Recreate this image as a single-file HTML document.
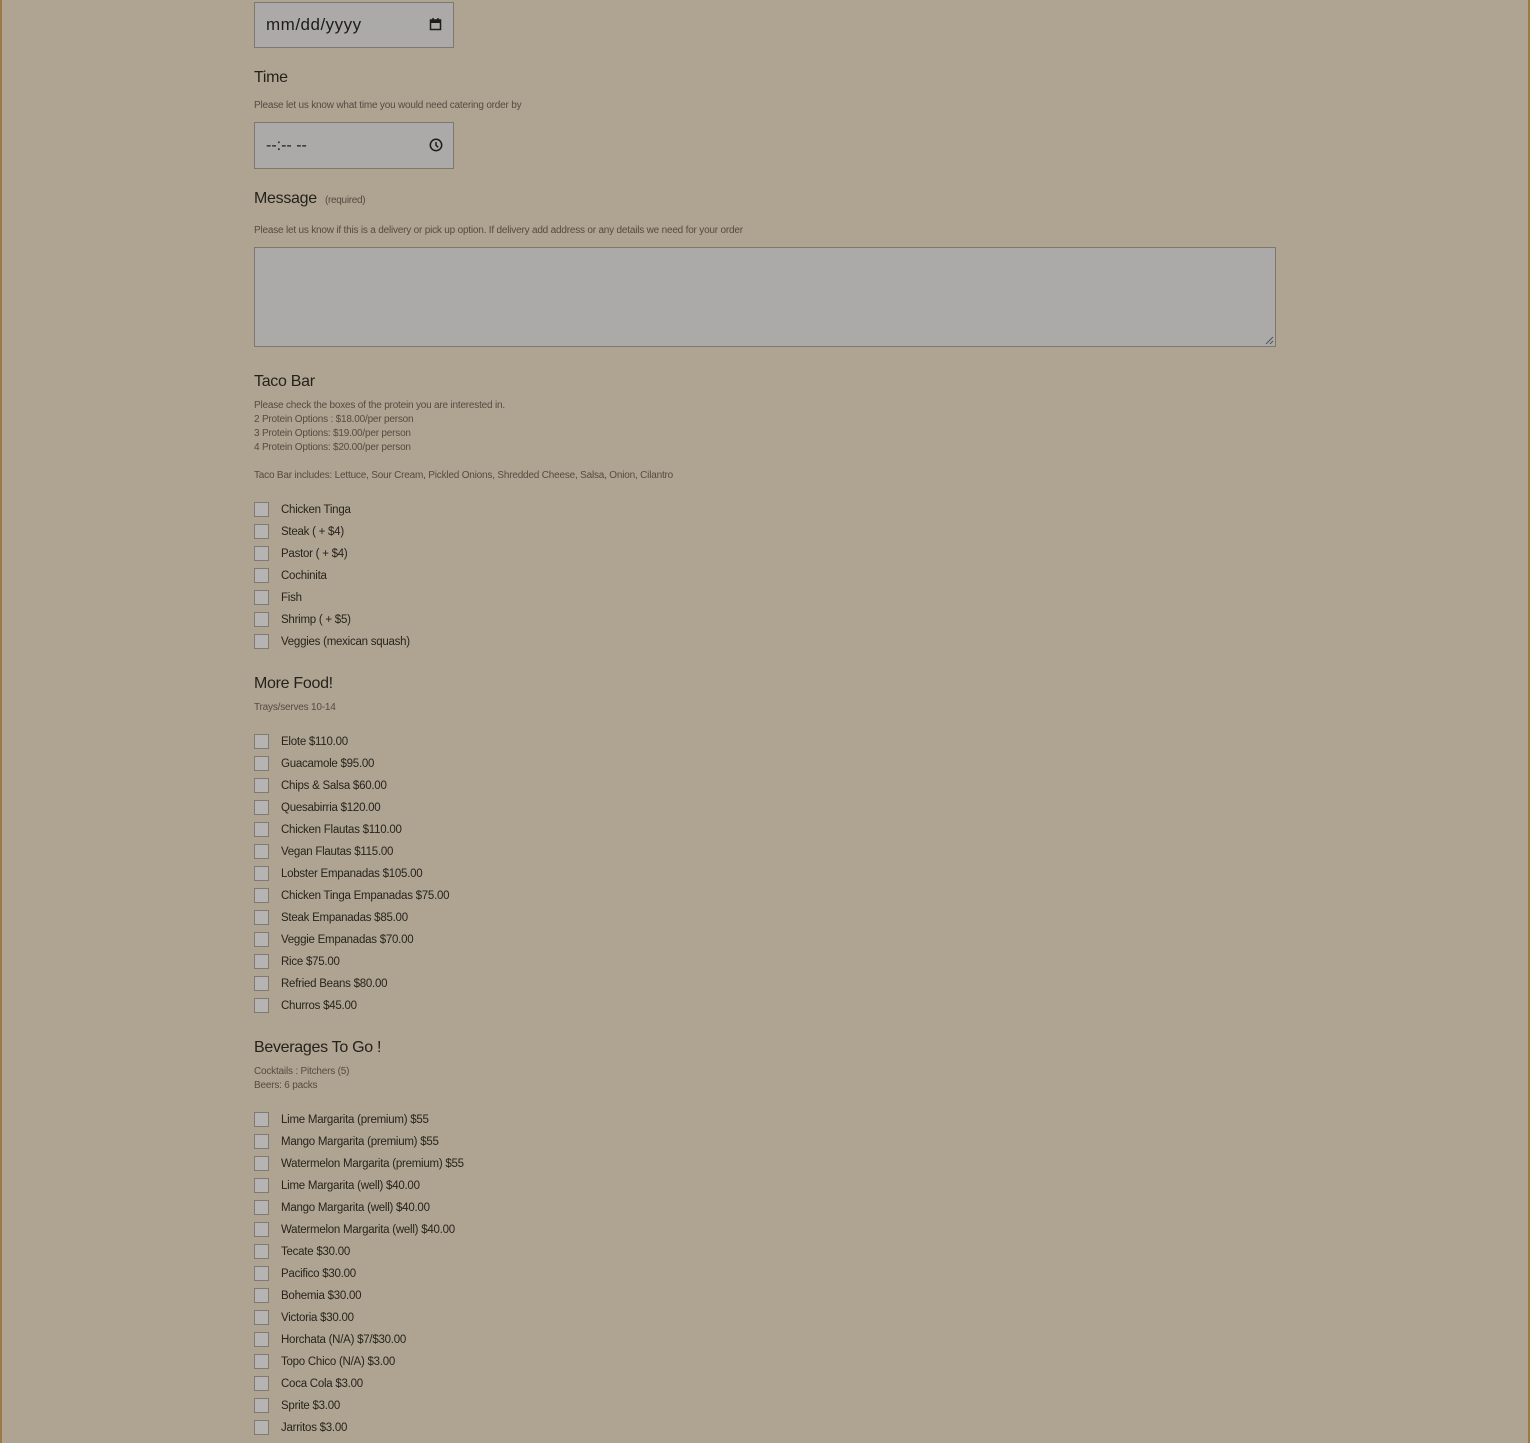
<!DOCTYPE html>
<html><head><meta charset="utf-8"><style>
html,body{margin:0;padding:0}
body{width:1530px;height:1443px;background:#aea491;position:relative;overflow:hidden;font-family:"Liberation Sans",sans-serif;color:#2b2621}
.edge{position:absolute;top:0;bottom:0;width:2px;background:#9c7a48}
.a{position:absolute;white-space:nowrap}
.h{font-size:16px;letter-spacing:-0.3px;color:#25211c}
.d{font-size:10px;letter-spacing:-0.2px;color:#544c42;line-height:14px}
.inp{position:absolute;background:#abaaa8;border:1px solid #7c776f;box-sizing:border-box}
.r{position:absolute;left:254px;height:16px;line-height:17px;font-size:11.5px;letter-spacing:-0.25px;color:#27231e;white-space:nowrap;padding-left:27px}
.r i{position:absolute;left:0;top:0;width:15px;height:15px;box-sizing:border-box;border:1px solid #7f7b74;background:#b5b4b2}
</style></head><body>
<div class="edge" style="left:0"></div><div class="edge" style="right:0"></div>

<div class="inp" style="left:254px;top:2px;width:200px;height:46px"></div>
<div class="a" style="left:266px;top:15px;font-size:17px;color:#1f1c18;letter-spacing:0.5px;font-weight:300">mm/dd/yyyy</div>
<svg class="a" style="left:429px;top:17px" width="13" height="14" viewBox="0 0 13 14"><rect x="1.5" y="3" width="10" height="9.5" fill="none" stroke="#1f1c18" stroke-width="1.5"/><rect x="1.5" y="3" width="10" height="3" fill="#1f1c18"/><path d="M4 1v3M9 1v3" stroke="#1f1c18" stroke-width="1.5"/></svg>

<div class="a h" style="left:254px;top:69px">Time</div>
<div class="a d" style="left:254px;top:99px">Please let us know what time you would need catering order by</div>
<div class="inp" style="left:254px;top:122px;width:200px;height:47px"></div>
<div class="a" style="left:266px;top:137px;font-size:16px;color:#1f1c18">--:-- --</div>
<svg class="a" style="left:429px;top:138px" width="14" height="14" viewBox="0 0 14 14"><circle cx="7" cy="7" r="5.7" fill="none" stroke="#1f1c18" stroke-width="1.5"/><path d="M7 4v3.3l2.2 2" fill="none" stroke="#1f1c18" stroke-width="1.5"/></svg>

<div class="a h" style="left:254px;top:190px">Message <span style="font-size:10px;color:#544c42;margin-left:4px">(required)</span></div>
<div class="a d" style="left:254px;top:224px">Please let us know if this is a delivery or pick up option. If delivery add address or any details we need for your order</div>
<div class="inp" style="left:254px;top:247px;width:1022px;height:100px"></div>
<svg class="a" style="left:1265px;top:336px" width="9" height="9"><path d="M1 8L8 1M5 8L8 5" stroke="#555" stroke-width="1"/></svg>

<div class="a h" style="left:254px;top:373px">Taco Bar</div>
<div class="a d" style="left:254px;top:399px">Please check the boxes of the protein you are interested in.<br>2 Protein Options : $18.00/per person<br>3 Protein Options: $19.00/per person<br>4 Protein Options: $20.00/per person<br><br>Taco Bar includes: Lettuce, Sour Cream, Pickled Onions, Shredded Cheese, Salsa, Onion, Cilantro</div>

<div class="r" style="top:502px"><i></i>Chicken Tinga</div>
<div class="r" style="top:524px"><i></i>Steak ( + $4)</div>
<div class="r" style="top:546px"><i></i>Pastor ( + $4)</div>
<div class="r" style="top:568px"><i></i>Cochinita</div>
<div class="r" style="top:590px"><i></i>Fish</div>
<div class="r" style="top:612px"><i></i>Shrimp ( + $5)</div>
<div class="r" style="top:634px"><i></i>Veggies (mexican squash)</div>

<div class="a h" style="left:254px;top:675px">More Food!</div>
<div class="a d" style="left:254px;top:701px">Trays/serves 10-14</div>

<div class="r" style="top:734px"><i></i>Elote $110.00</div>
<div class="r" style="top:756px"><i></i>Guacamole $95.00</div>
<div class="r" style="top:778px"><i></i>Chips &amp; Salsa $60.00</div>
<div class="r" style="top:800px"><i></i>Quesabirria $120.00</div>
<div class="r" style="top:822px"><i></i>Chicken Flautas $110.00</div>
<div class="r" style="top:844px"><i></i>Vegan Flautas $115.00</div>
<div class="r" style="top:866px"><i></i>Lobster Empanadas $105.00</div>
<div class="r" style="top:888px"><i></i>Chicken Tinga Empanadas $75.00</div>
<div class="r" style="top:910px"><i></i>Steak Empanadas $85.00</div>
<div class="r" style="top:932px"><i></i>Veggie Empanadas $70.00</div>
<div class="r" style="top:954px"><i></i>Rice $75.00</div>
<div class="r" style="top:976px"><i></i>Refried Beans $80.00</div>
<div class="r" style="top:998px"><i></i>Churros $45.00</div>

<div class="a h" style="left:254px;top:1039px">Beverages To Go !</div>
<div class="a d" style="left:254px;top:1065px">Cocktails : Pitchers (5)<br>Beers: 6 packs</div>

<div class="r" style="top:1112px"><i></i>Lime Margarita (premium) $55</div>
<div class="r" style="top:1134px"><i></i>Mango Margarita (premium) $55</div>
<div class="r" style="top:1156px"><i></i>Watermelon Margarita (premium) $55</div>
<div class="r" style="top:1178px"><i></i>Lime Margarita (well) $40.00</div>
<div class="r" style="top:1200px"><i></i>Mango Margarita (well) $40.00</div>
<div class="r" style="top:1222px"><i></i>Watermelon Margarita (well) $40.00</div>
<div class="r" style="top:1244px"><i></i>Tecate $30.00</div>
<div class="r" style="top:1266px"><i></i>Pacifico $30.00</div>
<div class="r" style="top:1288px"><i></i>Bohemia $30.00</div>
<div class="r" style="top:1310px"><i></i>Victoria $30.00</div>
<div class="r" style="top:1332px"><i></i>Horchata (N/A) $7/$30.00</div>
<div class="r" style="top:1354px"><i></i>Topo Chico (N/A) $3.00</div>
<div class="r" style="top:1376px"><i></i>Coca Cola $3.00</div>
<div class="r" style="top:1398px"><i></i>Sprite $3.00</div>
<div class="r" style="top:1420px"><i></i>Jarritos $3.00</div>
</body></html>
